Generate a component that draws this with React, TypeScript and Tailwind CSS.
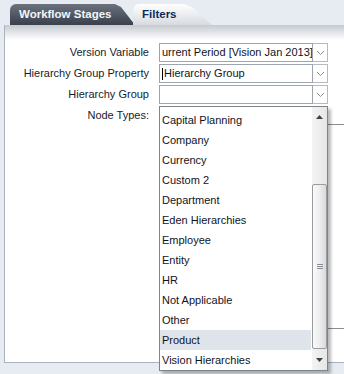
const nodeTypes = [
  'Capital Planning',
  'Company',
  'Currency',
  'Custom 2',
  'Department',
  'Eden Hierarchies',
  'Employee',
  'Entity',
  'HR',
  'Not Applicable',
  'Other',
  'Product',
  'Vision Hierarchies',
];

function Chevron() {
  return (
    <svg width="9" height="6" viewBox="0 0 9 6">
      <polyline points="1,1 4.5,4.5 8,1" fill="none" stroke="#8a8f96" strokeWidth="1" />
    </svg>
  );
}

function Select({ value, caret }: { value?: string; caret?: boolean }) {
  return (
    <div className="flex h-[19px] w-[169px]">
      <div className="flex flex-1 items-center overflow-hidden whitespace-nowrap border border-[#9da4ad] bg-white pl-[2px] text-[#10131d]">
        {caret && <span className="mr-px inline-block h-[12px] w-px bg-black" />}
        {value}
      </div>
      <div className="flex w-[15px] items-center justify-center border border-l-0 border-[#b4bac2] bg-white">
        <Chevron />
      </div>
    </div>
  );
}

function Label({ children }: { children: React.ReactNode }) {
  return <div className="h-[19px] text-right leading-[19px] text-[#161c2c]">{children}</div>;
}

export default function App() {
  return (
    <div
      className="relative h-[374px] w-[344px] overflow-hidden bg-[#e6ecf2] text-[11px]"
      style={{ fontFamily: '"Liberation Sans", Arial, sans-serif' }}
    >
      {/* Tabs */}
      <div className="flex h-[25px] items-end pl-[10px]">
        <div className="flex h-[21px] w-[125px] items-center rounded-tl-[6px] bg-linear-to-b from-[#6b737f] to-[#3a414c] pl-[9px] text-[11.5px] font-bold text-[#f2f6fb] [clip-path:polygon(0_0,calc(100%-20px)_0,calc(100%-14px)_3px,100%_100%,0_100%)]">
          Workflow Stages
        </div>
        <div className="relative z-10 -ml-[2px] flex h-[21px] w-[79px] items-center rounded-tl-[6px] bg-linear-to-b from-white to-[#d7dbe0] pl-[9px] text-[11.5px] font-bold text-[#0d2b5a] [clip-path:polygon(0_0,calc(100%-28px)_0,calc(100%-20px)_3px,100%_100%,0_100%)]">
          Filters
        </div>
      </div>

      {/* Panel */}
      <div className="ml-[4px] h-[338px] border-b border-l border-[#aab2bc] bg-white">
        <div className="h-[15px] bg-linear-to-b from-[#c6cad0] to-white" />
        <div className="grid grid-cols-[144px_170px] gap-x-[10px] gap-y-[2px] pt-[3px]">
          <Label>Version Variable</Label>
          <Select value="urrent Period [Vision Jan 2013]" />
          <Label>Hierarchy Group Property</Label>
          <Select value="Hierarchy Group" caret />
          <Label>Hierarchy Group</Label>
          <Select />
          <Label>Node Types:</Label>
          <div className="w-[220px]">
            <div className="mt-[18px] h-[205px] border-y border-[#8d8d8d]" />
          </div>
        </div>
      </div>

      {/* Open dropdown list */}
      <div className="absolute left-[159px] top-[106px] h-[265px] w-[169px] overflow-hidden border border-[#7e848c] bg-white shadow-[3px_3px_3px_rgba(0,0,0,0.28)]">
        <div className="pr-[16px] pt-[3px]">
          {nodeTypes.map(t => (
            <div
              key={t}
              className={`h-[20px] whitespace-nowrap pl-[2px] leading-[20px] text-[#10131d] ${t === 'Product' ? 'bg-[#dfe4ea]' : ''}`}
            >
              {t}
            </div>
          ))}
        </div>

        {/* Scrollbar */}
        <div className="absolute bottom-0 right-0 top-0 flex w-[15px] flex-col bg-linear-to-r from-[#f4f4f4] to-[#e6e6e6]">
          <div className="flex h-[17px] items-center justify-center pt-[2px]">
            <svg width="7" height="4" viewBox="0 0 7 4">
              <polygon points="3.5,0 7,4 0,4" fill="#3f4247" />
            </svg>
          </div>
          <div className="h-[60px]" />
          <div className="flex h-[165px] items-center justify-center rounded-[2px] border border-[#979ca3] bg-linear-to-r from-[#fafafa] via-[#eeeeee] to-[#d9d9d9]">
            <div className="flex flex-col gap-[1px]">
              <div className="h-px w-[6px] bg-[#8a8e94]" />
              <div className="h-px w-[6px] bg-[#8a8e94]" />
              <div className="h-px w-[6px] bg-[#8a8e94]" />
            </div>
          </div>
          <div className="flex flex-1 items-center justify-center">
            <svg width="7" height="4" viewBox="0 0 7 4">
              <polygon points="0,0 7,0 3.5,4" fill="#3f4247" />
            </svg>
          </div>
        </div>
      </div>
    </div>
  );
}
